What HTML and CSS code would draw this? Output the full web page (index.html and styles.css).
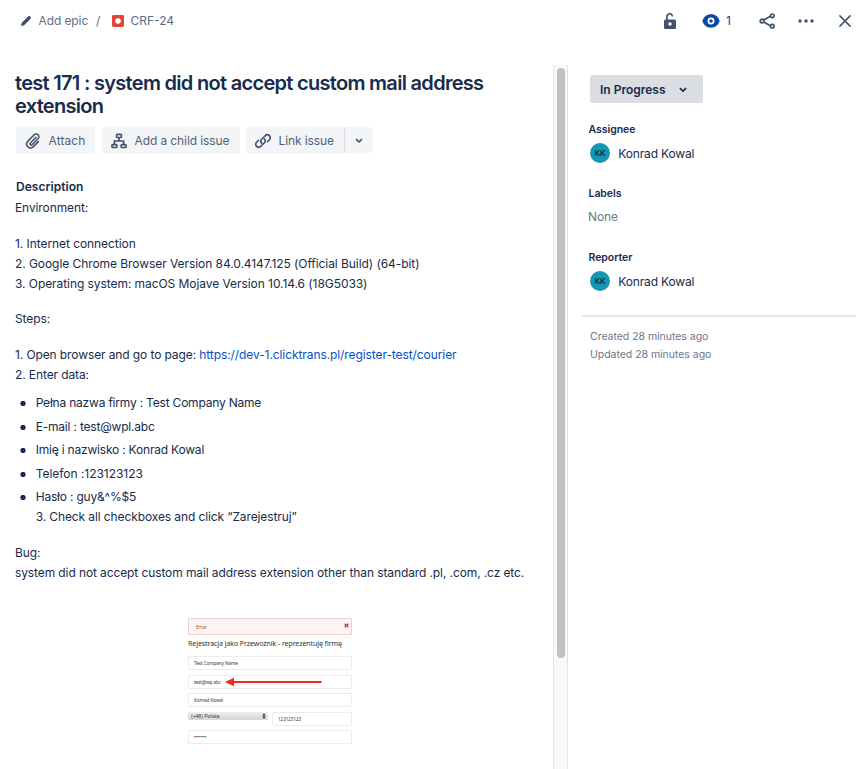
FILE: index.html
```html
<!DOCTYPE html>
<html lang="en">
<head>
<meta charset="utf-8">
<title>CRF-24</title>
<link rel="stylesheet" href="styles.css">
</head>
<body>
<header class="topbar">
  <nav class="crumbs">
    <svg class="pencil" width="12" height="12" viewBox="0 0 12 12"><path d="M1 11l.8-3.2L7 2.6l2.4 2.4-5.2 5.2zM7 2.600l1.600-1.500q.6-.4 1.100 0l1.200 1.200q.4.5 0 1L9.400 5z" fill="#42526e"/></svg>
    <span class="epic">Add epic</span>
    <span class="slash">/</span>
    <svg class="bug" width="12" height="12" viewBox="0 0 12 12"><rect width="12" height="12" rx="1.4" fill="#e2463b"/><circle cx="6" cy="6" r="2.8" fill="#fff"/></svg>
    <span class="key">CRF-24</span>
  </nav>
  <div class="actions">
    <svg class="lock" width="14" height="18" viewBox="0 0 14 18"><path d="M4 8V4.500a2.700 2.700 0 0 1 5.300-.8" fill="none" stroke="#42526e" stroke-width="1.700" stroke-linecap="round"/><rect x="1" y="7.600" width="12" height="9.300" rx="1.500" fill="#42526e"/><circle cx="7" cy="12" r="1.700" fill="#fff"/></svg>
    <svg class="eye" width="18" height="14" viewBox="0 0 18 14"><path d="M9 .3C4.800.3 1.600 3 .4 7c1.200 4 4.400 6.700 8.600 6.700S16.400 11 17.600 7C16.400 3 13.200.3 9 .3z" fill="#0747a6"/><circle cx="9" cy="7" r="2.600" fill="none" stroke="#fff" stroke-width="1.700"/></svg>
    <span class="watchers">1</span>
    <svg class="share" width="17" height="16" viewBox="0 0 17 16"><g fill="none" stroke="#42526e" stroke-width="1.700"><path d="M4.700 7l6.600-3.700M4.700 9l6.600 3.700"/><circle cx="3" cy="8" r="1.800"/><circle cx="13.300" cy="2.800" r="1.800"/><circle cx="13.300" cy="13.200" r="1.800"/></g></svg>
    <svg class="dots" width="16" height="4" viewBox="0 0 16 4"><g fill="#42526e"><circle cx="2" cy="2" r="1.700"/><circle cx="8" cy="2" r="1.700"/><circle cx="14" cy="2" r="1.700"/></g></svg>
    <svg class="close" width="12" height="12" viewBox="0 0 12 12"><path d="M.9.9l10.200 10.200M11.100.9L.9 11.100" stroke="#42526e" stroke-width="1.500" stroke-linecap="round"/></svg>
  </div>
</header>
<div class="columns">
  <main class="issue">
    <h1>test 171 : system did not accept custom mail address extension</h1>
    <div class="buttons">
      <button class="attach"><svg width="16" height="16" viewBox="0 0 16 16"><path d="M11.400 4.300L5.800 9.900a1.200 1.200 0 0 0 1.700 1.700l6-6a2.700 2.700 0 0 0-3.900-3.900L3 8.300a3.900 3.900 0 0 0 5.500 5.500l5.300-5.300" transform="translate(-.4 .1)" fill="none" stroke="#42526e" stroke-width="1.600" stroke-linecap="round"/></svg><span>Attach</span></button>
      <button class="child"><svg width="16" height="16" viewBox="0 0 16 16"><g fill="none" stroke="#42526e" stroke-width="1.700"><rect x="5.600" y="1.300" width="4.800" height="3.200" rx=".7"/><rect x="1" y="11.600" width="4.800" height="2.900" rx=".7"/><rect x="10.200" y="11.600" width="4.800" height="2.900" rx=".7"/><path d="M8 4.500V8M3.400 11.600V8h9.200v3.600"/></g></svg><span>Add a child issue</span></button>
      <div class="split">
        <button class="link"><svg width="16" height="16" viewBox="0 0 16 16"><g fill="none" stroke="#42526e" stroke-width="1.600" stroke-linecap="round"><path d="M6.700 10.100a2.700 2.700 0 0 1-.1-3.800l3.600-3.600a2.900 2.900 0 0 1 4.200 4l-2 2"/><path d="M9.300 5.900a2.700 2.700 0 0 1 .1 3.800l-3.600 3.600a2.900 2.900 0 0 1-4.200-4l2-2"/></g></svg><span>Link issue</span></button>
        <button class="more" aria-label="More link options"><svg width="8" height="6" viewBox="0 0 8 6"><path d="M1.500 1.500L4 4l2.500-2.500" fill="none" stroke="#42526e" stroke-width="1.700" stroke-linecap="round" stroke-linejoin="round"/></svg></button>
      </div>
    </div>
    <h2>Description</h2>
    <div class="text">
      <p>Environment:</p>
      <p class="list env">1. Internet connection<br>2. Google Chrome Browser Version 84.0.4147.125 (Official Build) (64-bit)<br>3. Operating system: macOS Mojave Version 10.14.6 (18G5033)</p>
      <p class="steps">Steps:</p>
      <p class="list">1. Open browser and go to page: <a>https://dev-1.clicktrans.pl/register-test/courier</a><br>2. Enter data:</p>
      <ul>
        <li>Pełna nazwa firmy : Test Company Name</li>
        <li>E-mail : test@wpl.abc</li>
        <li>Imię i nazwisko : Konrad Kowal</li>
        <li class="digits">Telefon :123123123</li>
        <li>Hasło : guy&amp;^%$5<br><span class="check">3. Check all checkboxes and click “Zarejestruj”</span></li>
      </ul>
      <p>Bug:<br>system did not accept custom mail address extension other than standard .pl, .com, .cz etc.</p>
    </div>
    <section class="shot">
      <div class="error"><span>Error</span><svg width="5" height="5" viewBox="0 0 5 5"><path d="M.7.7l3.600 3.600M4.300.7L.7 4.300" stroke="#a94442" stroke-width="1.300"/></svg></div>
      <h3>Rejestracja jako Przewoźnik - reprezentuję firmę</h3>
      <div class="field">Test Company Name</div>
      <div class="field mail">test@wp.abc<svg width="97" height="10" viewBox="0 0 97 10"><path d="M8 4h88.500v2H8z" fill="#f0281e"/><path d="M0 5L9 .8v8.400z" fill="#f0281e"/></svg></div>
      <div class="field">Konrad Kowal</div>
      <div class="phone"><div class="select"><span>(+48) Polska</span><svg width="4" height="6" viewBox="0 0 4 6"><path d="M.3 2.500L2 .3l1.700 2.200zM.3 3.500L2 5.700l1.700-2.200z" fill="#222"/></svg></div><div class="field">123123123</div></div>
      <div class="field pass">••••••••</div>
    </section>
  </main>
  <div class="scroll"><div class="thumb"></div></div>
  <aside>
    <button class="status"><span>In Progress</span><svg width="8" height="6" viewBox="0 0 8 6"><path d="M1.300 1.500L4 4.200l2.700-2.700" fill="none" stroke="#172b4d" stroke-width="1.700" stroke-linecap="round" stroke-linejoin="round"/></svg></button>
    <h4>Assignee</h4>
    <div class="person"><span class="avatar">KK</span><span>Konrad Kowal</span></div>
    <h4>Labels</h4>
    <div class="none">None</div>
    <h4>Reporter</h4>
    <div class="person"><span class="avatar">KK</span><span>Konrad Kowal</span></div>
    <div class="dates"><div>Created 28 minutes ago</div><div>Updated 28 minutes ago</div></div>
  </aside>
</div>
</body>
</html>
```
FILE: styles.css
```css
* { box-sizing: border-box; }
body { margin: 0; height: 769px; overflow: hidden; display: flex; flex-direction: column; background: #fff; color: #172b4d; font-family: Inter, "Liberation Sans", sans-serif; font-size: 12px; }
svg { display: block; flex: none; }
h1, h2, h3, h4, p, ul { margin: 0; padding: 0; }
button { display: flex; align-items: center; border: 0; padding: 0; font: inherit; color: inherit; background: none; white-space: nowrap; }

.topbar { height: 65px; flex: none; display: flex; justify-content: space-between; padding: 0 9px 0 20px; color: #5e6c84; }
.crumbs, .actions { display: flex; align-items: center; height: 41px; white-space: nowrap; }
.epic { width: 57.500px; margin-left: 6.500px; letter-spacing: -.1px; }
.slash { width: 16px; }
.bug { margin-right: 6.500px; }
.eye { margin-left: 25px; }
.watchers { width: 7px; margin-left: 6px; color: #0747a6; }
.share { margin-left: 26px; }
.dots { margin-left: 22px; }
.close { margin-left: 25px; }

.columns { flex: 1; min-height: 0; display: flex; }
.issue { width: 553px; padding: 7px 15px 0; }
h1 { font-size: 20px; line-height: 23px; font-weight: 600; letter-spacing: -.7px; width: 490px; }
.buttons { display: flex; margin-top: 9px; height: 27px; color: #505f79; }
.buttons button { height: 27px; background: #f4f5f7; border-radius: 2px; }
.attach { width: 79px; margin-left: 1px; }
.child { width: 138px; margin-left: 7px; }
.split { display: flex; margin-left: 6px; }
.link { width: 98px; }
.buttons .more { width: 29px; height: 26px; padding: 2px 0 0 10px; border-left: 1px solid #dadde3; }
.buttons svg + span { margin-left: 7.500px; letter-spacing: -.1px; }
.buttons .attach span { letter-spacing: .1px; }
.attach svg, .child svg, .link svg { margin-left: 9px; }
h2 { font-size: 12px; font-weight: 600; line-height: 20px; margin: 23px 0 0 1px; letter-spacing: .05px; }
.text { line-height: 20px; margin-top: 1px; white-space: nowrap; letter-spacing: -.105px; }
.list { margin-top: 16px; }
.env { letter-spacing: -.065px; }
.steps { margin-top: 15px; }
.text a { color: #0052cc; letter-spacing: -.085px; }
ul { list-style: none; margin: 8px 0 16px; letter-spacing: -.2px; }
li { padding-left: 20.700px; margin-bottom: 3.5px; display: flow-root; background: radial-gradient(circle at 8px 10.500px, #172b4d 2.300px, transparent 3px); }
li:last-child { margin-bottom: 0; }
.digits { letter-spacing: -.03px; }
.check { letter-spacing: -.11px; }

.shot { width: 164px; margin: 35px 0 0 173px; color: #333; font-family: "Noto Sans", sans-serif; font-size: 4.500px; }
.error { height: 17px; border: 1px solid #efcfcf; background: #fff3f3; color: #a94442; display: flex; justify-content: space-between; padding: 0 2px 0 7px; line-height: 16px; border-radius: 1px; }
.error svg { margin-top: 4px; }
h3 { font: 400 7px/18px "Noto Sans", sans-serif; letter-spacing: -.07px; white-space: nowrap; height: 21px; }
.field { height: 14px; border: 1px solid #ececec; line-height: 13px; padding-left: 5px; margin-bottom: 4.500px; border-radius: 1px; }
.mail { display: flex; }
.mail svg { margin: 1px 0 0 4px; }
.phone { display: flex; justify-content: space-between; }
.phone .field { width: 80px; margin-top: 0; }
.select { width: 80px; height: 8px; background: linear-gradient(#eee, #d6d6d6); line-height: 8px; display: flex; justify-content: space-between; padding: 0 2px 0 3px; border-radius: 1px; font-size: 5px; font-family: "Liberation Sans", sans-serif; }
.select svg { margin-top: 1px; }
.pass { letter-spacing: -.15px; }

.scroll { width: 15px; background: #f9f9f9; border: solid #e5e5e5; border-width: 0 1px; padding: 3px 3px 0; }
.thumb { width: 8px; height: 590px; border-radius: 4px; background: #c1c1c1; }

aside { flex: 1; padding: 10px 4px 0 14px; }
.status { width: 113px; height: 28px; margin-left: 8px; padding-left: 10px; background: #dadde2; border-radius: 2px; font-weight: 600; }
.status svg { margin: 2px 0 0 13px; }
h4 { font-size: 10.500px; line-height: 16px; font-weight: 600; margin-left: 6.500px; letter-spacing: -.05px; }
.status + h4 { margin-top: 19px; }
.person { display: flex; align-items: center; height: 20px; margin: 5px 0 34px 8px; letter-spacing: -.15px; }
.avatar { width: 20px; height: 20px; margin-right: 8.300px; border-radius: 50%; background: #1197b3; font-size: 8px; font-weight: 600; line-height: 20px; text-align: center; letter-spacing: 0; }
.person + h4 { margin-top: -11px; }
.none { color: #6b778c; line-height: 18px; margin: 6px 0 24px 6px; letter-spacing: -.15px; }
.dates { border-top: 2px solid #e6e8ed; margin-top: -10px; padding: 11px 0 0 8px; color: #6b778c; font-size: 10.500px; line-height: 18px; letter-spacing: -.03px; }
```
